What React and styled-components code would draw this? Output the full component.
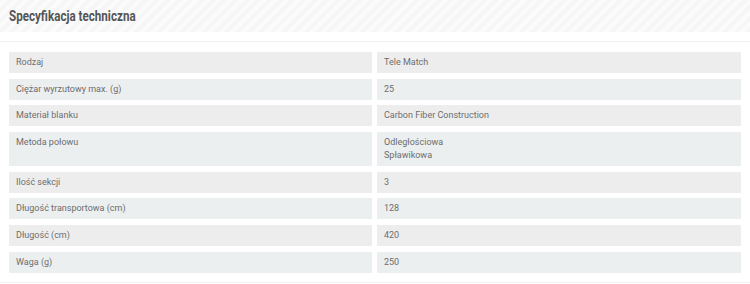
import React from "react";
import styled, {createGlobalStyle} from "styled-components";

const GlobalStyle = createGlobalStyle`
  body {
    margin: 0;
    background: #ffffff;
    font-family: Roboto, "Liberation Sans", sans-serif;
  }
`;

const Header = styled.div`
  height: 32px;
  display: flex;
  align-items: center;
  padding-left: 9px;
  background: repeating-linear-gradient(
    -45deg,
    #f6f6f6 0px,
    #f6f6f6 4px,
    #fbfbfb 4px,
    #fbfbfb 8px
  );
`;

const Title = styled.h2`
  margin: 0;
  font-size: 14px;
  font-weight: 700;
  color: #555555;
  display: inline-block;
  transform: scaleX(0.83);
  transform-origin: left center;
  white-space: nowrap;
`;

const SpecBox = styled.div`
  margin-top: 9px;
  border-top: 1px solid #f2f2f2;
  border-bottom: 1px solid #f2f2f2;
  padding: 10px 9px 9px;
`;

const SpecGrid = styled.div`
  display: grid;
  grid-template-columns: 363fr 364fr;
  column-gap: 5px;
  row-gap: 5.7px;
`;

const Cell = styled.div`
  background: ${({$alt}) => ($alt ? "#eceff0" : "#ededed")};
  padding: 4px 7px;
  font-size: 9px;
  line-height: 13px;
  color: #6d6d6d;
`;

const specs = [
  {label: "Rodzaj", value: ["Tele Match"]},
  {label: "Ciężar wyrzutowy max. (g)", value: ["25"]},
  {label: "Materiał blanku", value: ["Carbon Fiber Construction"]},
  {label: "Metoda połowu", value: ["Odległościowa", "Spławikowa"]},
  {label: "Ilość sekcji", value: ["3"]},
  {label: "Długość transportowa (cm)", value: ["128"]},
  {label: "Długość (cm)", value: ["420"]},
  {label: "Waga (g)", value: ["250"]},
];

const App = () => {
  return (
    <>
      <GlobalStyle />
      <Header>
        <Title>Specyfikacja techniczna</Title>
      </Header>
      <SpecBox>
        <SpecGrid>
          {specs.map((row, i) => (
            <React.Fragment key={row.label}>
              <Cell $alt={i % 2 === 1}>{row.label}</Cell>
              <Cell $alt={i % 2 === 1}>
                {row.value.map((v) => (
                  <div key={v}>{v}</div>
                ))}
              </Cell>
            </React.Fragment>
          ))}
        </SpecGrid>
      </SpecBox>
    </>
  );
};

export default App;
